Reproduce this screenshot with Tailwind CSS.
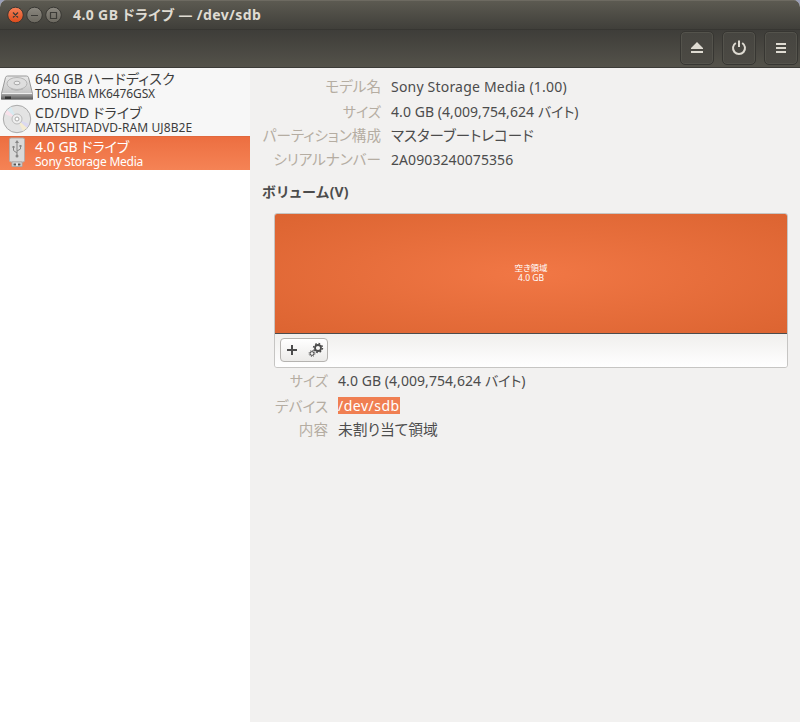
<!DOCTYPE html>
<html lang="ja">
<head>
<meta charset="utf-8">
<title>4.0 GB ドライブ — /dev/sdb</title>
<script src="https://cdn.jsdelivr.net/npm/@tailwindcss/browser@4"></script>
</head>
<body class="w-[800px] h-[722px] overflow-hidden bg-[#9a9fb8] font-['Noto_Sans','Noto_Sans_CJK_JP',sans-serif] text-[#4c4c4c] [font-feature-settings:'palt'] text-[14px]">
<div class="flex h-full flex-col overflow-hidden rounded-t-[7px] bg-[#f2f1f0]">
  <header class="flex h-[29px] shrink-0 items-center bg-linear-to-b from-[#5d5b52] to-[#403f3a] pl-[7px] shadow-[inset_0_1px_#6d6a61]">
    <svg class="h-[18px] w-[56px] shrink-0" viewBox="0 0 56 18">
      <defs>
        <linearGradient id="cl" x2="0" y2="1"><stop stop-color="#f58159"/><stop offset="1" stop-color="#dc4a1a"/></linearGradient>
        <linearGradient id="bt" x2="0" y2="1"><stop stop-color="#8b8880"/><stop offset="1" stop-color="#6b685f"/></linearGradient>
      </defs>
      <g stroke="#383733"><circle cx="8.500" cy="9" r="7.800" fill="url(#cl)"/><circle cx="27.500" cy="9" r="7.800" fill="url(#bt)"/><circle cx="46.500" cy="9" r="7.800" fill="url(#bt)"/></g>
      <path d="M6 6.500l5 5M11 6.500l-5 5M24 9.500h7M43.500 6.500h6v6h-6z" stroke="#3c3b37" stroke-width="1.200" fill="none"/>
    </svg>
    <h1 class="ml-[10px] whitespace-nowrap text-[14px] font-bold tracking-[0.38px] text-[#dfdbd2]">4.0 GB ドライブ — /dev/sdb</h1>
  </header>
  <div class="flex h-[39px] shrink-0 items-start justify-end gap-[8px] border-t border-b border-t-[#373632] border-b-[#3c3b37] bg-linear-to-b from-[#3e3d39] to-[#54524a] pr-[2px] pt-[1px]">
    <button class="grid h-[34px] w-[34px] place-items-center rounded-[5px] border border-[#373632] bg-linear-to-b from-[#464540] to-[#4c4a44] shadow-[inset_0_0_0_1px_#54534c]">
      <svg class="size-4" viewBox="0 0 16 16" fill="#dfdbd2"><path d="M8 2l6 6v1H2V8zM2 11h12v2H2z"/></svg>
    </button>
    <button class="grid h-[34px] w-[34px] place-items-center rounded-[5px] border border-[#373632] bg-linear-to-b from-[#464540] to-[#4c4a44] shadow-[inset_0_0_0_1px_#54534c]">
      <svg class="size-4" viewBox="0 0 16 16" fill="none" stroke="#dfdbd2" stroke-width="2"><path d="M4.800 3a6 6 0 1 0 6.400 0M8 .5v6.500"/></svg>
    </button>
    <button class="grid h-[34px] w-[34px] place-items-center rounded-[5px] border border-[#373632] bg-linear-to-b from-[#464540] to-[#4c4a44] shadow-[inset_0_0_0_1px_#54534c]">
      <svg class="size-4" viewBox="0 0 16 16" fill="#dfdbd2"><path d="M3 3h10v2H3zM3 7h10v2H3zM3 11h10v2H3z"/></svg>
    </button>
  </div>
  <main class="flex min-h-0 flex-1">
    <aside class="w-[250px] shrink-0 bg-white text-[#3c3c3c]">
      <div class="flex h-[34px] bg-[#f7f7f7]">
        <svg class="h-[34px] w-[34px] shrink-0" viewBox="0 0 34 34">
          <defs><linearGradient id="hd" x2="0" y2="1"><stop stop-color="#e8e8e8"/><stop offset="1" stop-color="#bcbcbc"/></linearGradient>
          <linearGradient id="hf" x2="0" y2="1"><stop stop-color="#a5a5a5"/><stop offset="1" stop-color="#585858"/></linearGradient></defs>
          <path d="M1.500 25.500L5.500 9.500q.5-1.500 2-1.500h19q1.500 0 2 1.500L32.500 25.500v5.500h-31z" fill="url(#hd)" stroke="#999"/>
          <path d="M1 26h32v5.500h-32z" fill="url(#hf)"/><path d="M5 28.500h6v2.500H5z" fill="#333"/><path d="M2 25.500h30" stroke="#eee"/>
          <ellipse cx="17" cy="15.500" rx="10" ry="6" fill="#dedede" stroke="#b5b5b5"/><ellipse cx="17" cy="15" rx="3" ry="1.800" fill="#eee" stroke="#aaa"/><path d="M11 21q5 3 12 0" stroke="#b5b5b5" fill="none"/>
        </svg>
        <div class="ml-[1px] whitespace-nowrap pt-px"><div class="h-[18px] text-[14px] leading-[19px] tracking-[0.2px]">640 GB ハードディスク</div><div class="h-[14px] text-[12px] leading-[14px] tracking-[-0.12px]">TOSHIBA MK6476GSX</div></div>
      </div>
      <div class="flex h-[34px] bg-[#f7f7f7]">
        <svg class="h-[34px] w-[34px] shrink-0" viewBox="0 0 34 34">
          <circle cx="17" cy="17" r="13.700" fill="#e3e3e3" stroke="#aaa"/><path d="M17 17L7 8l4-3z" fill="#d8eaf0"/><path d="M17 17L5 12l2-4z" fill="#f8e1ea"/><path d="M17 17l12 5-2 4z" fill="#dcd9f0"/><path d="M17 17l10 9-4 3z" fill="#f5ecd2"/><circle cx="17" cy="17" r="5" fill="#eee" stroke="#bbb"/><circle cx="17" cy="17" r="2" fill="#fff" stroke="#aaa"/>
        </svg>
        <div class="ml-[1px] whitespace-nowrap pt-px"><div class="h-[18px] text-[14px] leading-[19px] tracking-[0.23px]">CD/DVD ドライブ</div><div class="h-[14px] text-[12px] leading-[14px] tracking-[0.09px]">MATSHITADVD-RAM UJ8B2E</div></div>
      </div>
      <div class="flex h-[34px] bg-linear-to-b from-[#ec6e40] to-[#f58355] text-white shadow-[inset_0_1px_#e1693e]">
        <svg class="h-[34px] w-[34px] shrink-0" viewBox="0 0 34 34">
          <rect x="9.500" y="2" width="15" height="24" rx="1.500" fill="#d9d9d9" stroke="#b5aaa6"/><path d="M12 26h10v4.500H12z" fill="#e3e3e3" stroke="#aaa"/><path d="M13.500 27.500h2.500v2h-2.500zM18 27.500h2.500v2H18z" fill="#555"/>
          <path d="M17 6v14M17 17l-3.500-2.500V11M17 15l3.500-2v-3" stroke="#858585" fill="none"/><path d="M17 4l2 3h-4zM12.500 10h2v2h-2zM19.500 9h2v2h-2z" fill="#858585"/><circle cx="17" cy="20" r="1.500" fill="#858585"/>
        </svg>
        <div class="ml-[1px] whitespace-nowrap pt-px"><div class="h-[18px] text-[14px] leading-[19px]">4.0 GB ドライブ</div><div class="h-[14px] text-[12px] leading-[14px] tracking-[-0.23px]">Sony Storage Media</div></div>
      </div>
    </aside>
    <section class="w-[550px] pl-[12px] pr-[12px] pt-[7px]">
      <dl class="grid grid-cols-[119px_1fr] grid-rows-[25px_24px_24px_24px] gap-x-[10px] whitespace-nowrap leading-[24px]">
        <dt class="text-right text-[14.600px] leading-[23px] text-[#b5ada2]">モデル名</dt><dd class="tracking-[0.2px]">Sony Storage Media (1.00)</dd>
        <dt class="text-right text-[#b5ada2]">サイズ</dt><dd class="tracking-[0.06px]">4.0 GB (4,009,754,624 バイト)</dd>
        <dt class="text-right text-[14.600px] leading-[22px] text-[#b5ada2]">パーティション構成</dt><dd class="text-[14.500px] leading-[22px]">マスターブートレコード</dd>
        <dt class="text-right text-[14.600px] leading-[22px] text-[#b5ada2]">シリアルナンバー</dt><dd class="tracking-[0.08px]">2A0903240075356</dd>
      </dl>
      <h2 class="mt-[8px] h-[24px] font-bold leading-[24px] tracking-[0.8px]">ボリューム<span class="tracking-normal">(V)</span></h2>
      <div class="ml-[12px] mt-[9px] h-[155px] overflow-hidden rounded-[3px] border border-[#c6c5c3]">
        <div class="flex h-[120px] flex-col items-center justify-center border-b border-[#4c4c4c] bg-radial from-[#f17745] to-[#dc6431] pb-px text-center text-[8.500px] leading-[10px] text-white"><span>空き領域</span><span>4.0 GB</span></div>
        <div class="h-[33px] bg-linear-to-b from-[#f0efed] to-white pl-[5px] pt-[4px]">
          <div class="flex h-[24px] w-[48px] items-center rounded-[4px] border border-[#b5b3b0] bg-linear-to-b from-white to-[#ecebe9]">
            <svg class="h-[22px] w-[46px]" viewBox="0 0 46 22"><path d="M6 11h10M11 6v10" stroke="#4c4c4c" stroke-width="2"/><g fill="none" stroke="#4c4c4c"><circle cx="37" cy="9" r="3" stroke-width="1.800"/><circle cx="37" cy="9" r="4.400" stroke-width="1.600" stroke-dasharray="1.600 1.856"/><circle cx="31" cy="14.500" r="1.900"/><circle cx="31" cy="14.500" r="2.900" stroke-dasharray="1.100 1.177"/></g></svg>
          </div>
        </div>
      </div>
      <dl class="ml-[12px] grid grid-cols-[54px_1fr] grid-rows-[25px_24px_24px] gap-x-[10px] whitespace-nowrap pt-[1px] leading-[24px]">
        <dt class="text-right text-[#b5ada2]">サイズ</dt><dd class="tracking-[0.06px]">4.0 GB (4,009,754,624 バイト)</dd>
        <dt class="text-right text-[14.600px] text-[#b5ada2]">デバイス</dt><dd><span class="inline-block h-[17px] bg-[#f07f52] leading-[17px] tracking-[0.5px] text-white">/dev/sdb</span></dd>
        <dt class="text-right text-[14.600px] leading-[22px] text-[#b5ada2]">内容</dt><dd class="text-[14.800px] leading-[22px]">未割り当て領域</dd>
      </dl>
    </section>
  </main>
</div>
</body>
</html>
